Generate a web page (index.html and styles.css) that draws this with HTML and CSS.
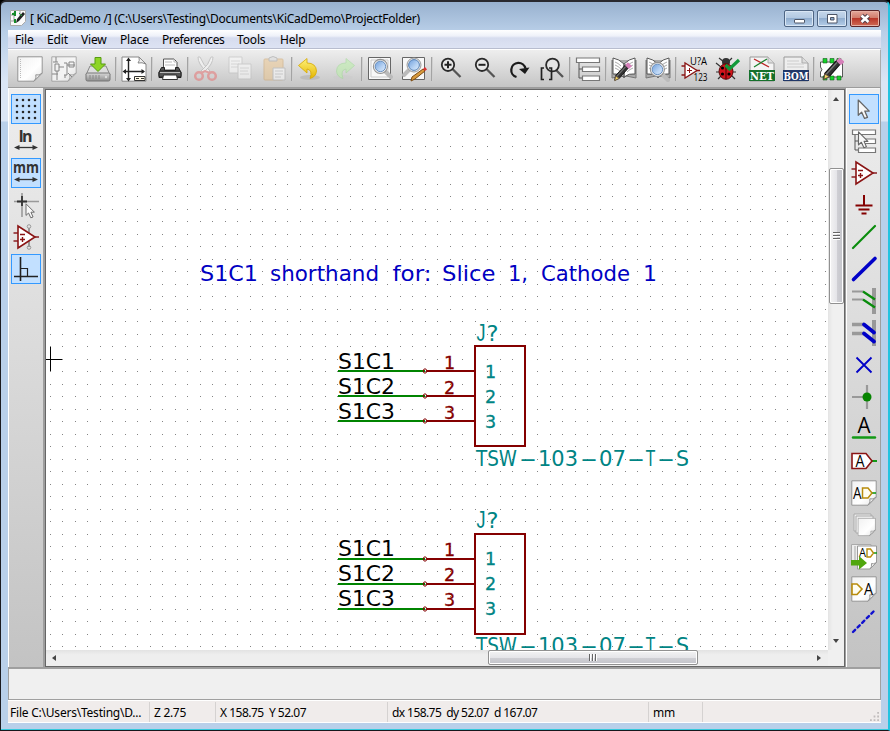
FILE: index.html
```html
<!DOCTYPE html>
<html lang="en">
<head>
<meta charset="utf-8">
<title>KiCadDemo</title>
<link rel="stylesheet" href="styles.css">
</head>
<body>
<svg class="defs" aria-hidden="true">
  <defs>
    <linearGradient id="paper" x1="0" y1="0" x2="1" y2="1"><stop offset="0" stop-color="#f1f1f1"/><stop offset=".6" stop-color="#fff"/><stop offset="1" stop-color="#e4e4e4"/></linearGradient>
    <linearGradient id="lens" x1="0" y1="0" x2="1" y2="1"><stop offset="0" stop-color="#6f9fdc"/><stop offset=".6" stop-color="#b9d4f4"/><stop offset="1" stop-color="#dceafb"/></linearGradient>
    <linearGradient id="metal" x1="0" y1="0" x2="0" y2="1"><stop offset="0" stop-color="#d8d8d8"/><stop offset="1" stop-color="#8d8d8d"/></linearGradient>
    <linearGradient id="gold" x1="0" y1="0" x2="0" y2="1"><stop offset="0" stop-color="#fff27a"/><stop offset="1" stop-color="#e3b500"/></linearGradient>
    <symbol id="page" viewBox="0 0 26 26"><path d="M.8 .8H25.2V17L17 25.2H.8Z" fill="url(#paper)" stroke="#959595"/><path d="M25.2 17Q22 20 18.8 18.800Q20 22 17 25.200Z" fill="#eee" stroke="#959595"/></symbol>
    <symbol id="opamp" viewBox="0 0 26 26"><path d="M.5 9H5M.5 17H5M21 13h5" stroke="#8a2024" stroke-width="1.6"/><path d="M5 2V24L22 13Z" fill="#fff" stroke="#8a1414" stroke-width="1.6"/><path d="M7 10.500h5M7 15.500h5M9.500 13v5" stroke="#8a1414" stroke-width="1.400"/></symbol>
    <symbol id="arrow" viewBox="0 0 12 20"><path d="M1 1V15.500L4.200 12.500L7 18.500L9.800 17.500L7.200 11.500H11.500Z" fill="#f8f8f8" stroke="#666" stroke-width="1.200" stroke-linejoin="round"/></symbol>
    <symbol id="glass" viewBox="0 0 20 20"><path d="M13 13l5 5" stroke="#bbb" stroke-width="4" stroke-linecap="round"/><circle cx="8" cy="8" r="6.700" fill="#eee" stroke="#929292"/><circle cx="8" cy="8" r="5" fill="url(#lens)" stroke="#5681b5" stroke-width=".8"/></symbol>
    <symbol id="pencil" viewBox="0 0 20 22"><path d="M2 20l1-5L14 3l3.500 3L7 18Z" fill="#333" stroke="#111"/><path d="M4 16L14 5" stroke="#777" stroke-width="1.200"/><path d="M2 20.500l1-5L7 18Z" fill="#f5d860" stroke="#654"/><path d="M14.500 3.500l2-2 3.500 3-2.500 2Z" fill="#d681ba" stroke="#d681ba" stroke-width="1.600"/></symbol>
    <symbol id="book" viewBox="0 0 26 26"><path d="M1 4V22l10-2 2 2 2-2 10 2V4" fill="#aaa" stroke="#777"/><path d="M2 2q6 1 11 6V21Q8 17 2 18ZM24 2Q18 3 13 8V21Q18 17 24 18Z" fill="#fff" stroke="#555"/><path d="M4 6q3 1 6 4M4 9q3 1 6 4M4 12q3 1 6 4M22 6q-3 1-6 4M22 9q-3 1-6 4M22 12q-3 1-6 4" fill="none" stroke="#aaa"/></symbol>
    <symbol id="tree" viewBox="0 0 26 26"><path d="M4 7V22H7M4 13H7" fill="none" stroke="#555"/><path d="M1.500 2h23v4.500h-23ZM7.500 11h17v4.500h-17ZM7.500 20h17v4.500h-17Z" fill="#fff" stroke="#777" stroke-width="1.200"/></symbol>
    <pattern id="grid" x="50" y="96" width="25" height="25" patternUnits="userSpaceOnUse"><path d="M0 0h1v1H0ZM12 0h1v1h-1ZM0 13h1v1H0ZM12 13h1v1h-1Z" fill="#848484"/></pattern>
  </defs>
</svg>

<div class="window">
  <header class="titlebar">
    <svg class="appicon" viewBox="0 0 16 16"><path d="M.5 .5h15v11l-4 4H.5Z" fill="#fafafa" stroke="#aaa"/><path d="M1 5h3M4 2v9M1 11h5M10 1v5" stroke="#999"/><path d="M5 1v5M5 9v4M2 4h3" stroke="#168a28" stroke-width="2"/><path d="M6 13l1-4 6-7 2 2-6 7Z" fill="#222"/><path d="M9 3l3 3" stroke="#29a03a"/></svg>
    <span class="caption">[ KiCadDemo /] (C:\Users\Testing\Documents\KiCadDemo\ProjectFolder)</span>
    <div class="controls">
      <span class="wbtn"><svg viewBox="0 0 30 16"><rect x="10.500" y="8.500" width="10" height="3.500" rx=".5" fill="#fff" stroke="#4c5566"/></svg></span>
      <span class="wbtn"><svg viewBox="0 0 30 16"><path d="M10.500 3.500h9.500v8.500h-9.500Z" fill="#fff" stroke="#4c5566"/><path d="M13.500 6.500h3.500v2.500h-3.500Z" fill="#8ba9cc" stroke="#4c5566"/></svg></span>
      <span class="wbtn close"><svg viewBox="0 0 30 16"><path d="M11.500 4.500l7 6.500M18.500 4.500l-7 6.500" stroke="#53414a" stroke-width="4.500"/><path d="M11.500 4.500l7 6.500M18.500 4.500l-7 6.500" stroke="#fff" stroke-width="2.500"/></svg></span>
    </div>
  </header>

  <nav class="menu"><span class="m1">File</span><span class="m2">Edit</span><span class="m3">View</span><span class="m4">Place</span><span class="m5">Preferences</span><span class="m6">Tools</span><span>Help</span></nav>

  <div class="toolbar">
    <span class="tool"><svg viewBox="0 0 26 26"><use href="#page"/><path d="M3.500 3v20" stroke="#bbb" stroke-dasharray="1 1"/></svg></span>
    <span class="tool"><svg viewBox="0 0 26 26"><use href="#page" opacity=".75"/><path d="M2 6h5M5 1v5M4 8h4v7H4ZM1 18h6M6 15v9M8 11h5M13 7h3v12h-3M14 19v3M16 9h8M18 6h5v5h-5ZM17 17l4 4" fill="none" stroke="#858585"/></svg></span>
    <span class="tool"><svg viewBox="0 0 26 26"><path d="M5 10L1 19h24l-4-9Z" fill="#ddd" stroke="#888"/><rect x="1" y="17" width="24" height="8" rx="1.500" fill="url(#metal)" stroke="#777"/><path d="M5 19v4M8 19v4M11 19v4M14 19v4" stroke="#888"/><circle cx="21" cy="21" r="1.200" fill="#ddd"/><path d="M10 1.500h6V8h4.500L13 15.500L5.500 8H10Z" fill="#8ed525" stroke="#579c12"/></svg></span>
    <i class="sep"></i>
    <span class="tool"><svg viewBox="0 0 26 26"><path d="M1 1H18l7 7V25.200H1Z" fill="#fff" stroke="#888"/><path d="M18 1q1 4-1 6 4-1 8 1Z" fill="#eee" stroke="#888"/><path d="M7.500 3v21M3 15.500h20" stroke="#222" stroke-width="1.400"/><path d="M5 5L7.500 1.500l2.500 3.500ZM5 22l2.500 3.500 2.500-3.500ZM5 13L1.500 15.500l3.500 2.500ZM20.500 13l3.500 2.500-3.500 2.500Z" fill="#222"/><path d="M13.500 20.500h10.500v4h-10.500Z" fill="#fff9e5" stroke="#333"/><path d="M15 22.500h3M20 22.500h3" stroke="#333"/></svg></span>
    <i class="sep"></i>
    <span class="tool"><svg viewBox="0 0 26 26"><path d="M6.500 14V3H17l3 3v8Z" fill="#fff" stroke="#555"/><path d="M17 3v3h3M8 6h7M8 9h10" fill="none" stroke="#bbb"/><path d="M4.500 11.500h3v3h11v-3h3l2.500 5v5H2v-5Z" fill="#555" stroke="#222"/><rect x="2" y="15" width="22" height="6" rx="1.500" fill="#555" stroke="#222"/><path d="M3 16.500h20" stroke="#bbb"/><path d="M6.500 19h13l1 4.500h-15Z" fill="#fff" stroke="#333"/></svg></span>
    <i class="sep"></i>
    <span class="tool faded"><svg viewBox="0 0 26 26"><path d="M5 1q0 7 8 14l2 2 2-2Q10 9 7 1Z" fill="#fff" stroke="#aaa"/><path d="M20 1q0 7-8 14l-3 2-1-2Q16 9 18 1Z" fill="#fff" stroke="#aaa"/><circle cx="6" cy="20" r="3.800" fill="none" stroke="#e86c6c" stroke-width="2.500"/><circle cx="19" cy="20" r="3.800" fill="none" stroke="#e86c6c" stroke-width="2.500"/><path d="M8 17l4-2 5 2" fill="none" stroke="#e86c6c" stroke-width="2"/></svg></span>
    <span class="tool faded"><svg viewBox="0 0 26 26"><path d="M2 1h13v16H2Z" fill="#fff" stroke="#bbb"/><path d="M4 5h9M4 8h8M4 11h7" stroke="#ccc"/><path d="M11 8h13v15H11Z" fill="#fff" stroke="#bbb"/><path d="M13 12h9M13 15h8M13 18h9" stroke="#ccc"/></svg></span>
    <span class="tool faded"><svg viewBox="0 0 26 26"><rect x="3" y="3" width="19" height="21" rx="1" fill="#edc58a" stroke="#cfa163"/><path d="M8 5V2q4-3 8 0v3Z" fill="#ddd" stroke="#999"/><path d="M12 12h12v12H12Z" fill="#fff" stroke="#aaa"/><path d="M14 15h8M14 18h8M14 21h6" stroke="#bbb"/></svg></span>
    <i class="sep"></i>
    <span class="tool"><svg viewBox="0 0 26 26"><ellipse cx="13" cy="21.500" rx="10" ry="2.500" fill="#bdbdbd"/><path d="M1.500 9.500L10 2.500V7Q19 7 19.500 15Q19 21 13 22.500Q16 14 10 13V17Z" fill="url(#gold)" stroke="#d5a800" stroke-width=".8"/></svg></span>
    <span class="tool faded"><svg viewBox="0 0 26 26"><ellipse cx="12" cy="21.500" rx="10" ry="2.500" fill="#ccc"/><path d="M23.500 9.500L15 2.500V7Q6 7 5.500 15Q6 21 12 22.500Q9 14 15 13V17Z" fill="#b8f2a4" stroke="#8fd882" stroke-width=".8"/></svg></span>
    <i class="sep"></i>
    <span class="tool"><svg viewBox="0 0 26 26"><path d="M1.500 1.500h22v22h-22Z" fill="#f8f8f8" stroke="#666"/><path d="M4 4h17v17H4Z" fill="none" stroke="#ccc"/><use href="#glass" x="5" y="2" width="21" height="21"/></svg></span>
    <span class="tool"><svg viewBox="0 0 26 26"><path d="M1.500 1.500h22v22h-22Z" fill="#f8f8f8" stroke="#666"/><path d="M9 13l-6 6" stroke="#bbb" stroke-width="4" stroke-linecap="round"/><circle cx="13" cy="9" r="7" fill="#eee" stroke="#999"/><circle cx="13" cy="9" r="5.400" fill="url(#lens)" stroke="#5681b5"/><path d="M10 25l1-4 11-8 2 2-10 8Z" fill="#d99a3b" stroke="#7b4c16"/><path d="M22 13l2 2 2-1.500-2-2.500Z" fill="#d33"/></svg></span>
    <i class="sep"></i>
    <span class="tool"><svg viewBox="0 0 26 26"><path d="M15.500 13l8 8" stroke="#555" stroke-width="2.300"/><circle cx="11" cy="8.800" r="6.200" fill="#e7e7e7" stroke="#2a2a2a" stroke-width="1.800"/><path d="M7.500 8.800h7M11 5.300v7" stroke="#222" stroke-width="2"/></svg></span>
    <span class="tool"><svg viewBox="0 0 26 26"><path d="M15.500 13l8 8" stroke="#555" stroke-width="2.300"/><circle cx="11" cy="8.800" r="6.200" fill="#e7e7e7" stroke="#2a2a2a" stroke-width="1.800"/><path d="M7.500 8.800h7" stroke="#222" stroke-width="2"/></svg></span>
    <span class="tool"><svg viewBox="0 0 26 26"><path d="M11.500 21A7.200 7.200 0 1 1 20.500 12.500" fill="none" stroke="#1b1b1b" stroke-width="2.300"/><path d="M14 13L24.500 11.500L20 18Z" fill="#1b1b1b"/></svg></span>
    <span class="tool"><svg viewBox="0 0 26 26"><path d="M17 14l7 7" stroke="#555" stroke-width="2.300"/><circle cx="13.500" cy="9" r="6.400" fill="#e5e5e5" stroke="#2a2a2a" stroke-width="1.800"/><path d="M5 12H2.500v11.500h2.500M10 12h2.500v11.500H10" fill="none" stroke="#222" stroke-width="1.700"/></svg></span>
    <i class="sep"></i>
    <span class="tool"><svg viewBox="0 0 26 26"><use href="#tree"/></svg></span>
    <i class="sep"></i>
    <span class="tool"><svg viewBox="0 0 26 26"><use href="#book"/><use href="#pencil" x="1" y="6" width="20" height="20"/></svg></span>
    <span class="tool"><svg viewBox="0 0 26 26"><use href="#book"/><use href="#glass" x="4" y="5" width="21" height="21"/></svg></span>
    <i class="sep"></i>
    <span class="tool"><svg viewBox="0 0 26 26"><path d="M.5 10H4M.5 19H4M15 14.500h4" stroke="#8a1414" stroke-width="1.300"/><path d="M4 7v15l12-7.500Z" fill="#fff" stroke="#8a1414" stroke-width="1.300"/><path d="M6 14.500h5M8.500 12v5" stroke="#8a1414"/><text class="tiny" x="9" y="9" textLength="17" lengthAdjust="spacingAndGlyphs">U?A</text><text class="tiny" x="12.500" y="25" textLength="14" lengthAdjust="spacingAndGlyphs">123</text></svg></span>
    <span class="tool"><svg viewBox="0 0 26 26"><path d="M4 2l5 4M17 2l-4 4M1 7l5 4M1 16h6M3 23l4-4M21 16h-5M20 23l-4-4" stroke="#333" stroke-width="1.200"/><circle cx="11" cy="6" r="4" fill="#333"/><ellipse cx="11" cy="15.500" rx="7" ry="7.800" fill="#d2141b" stroke="#5e080a"/><path d="M11 8v15" stroke="#400"/><circle cx="7.500" cy="12" r="1.500"/><circle cx="7.500" cy="18" r="1.600"/><circle cx="14" cy="18" r="1.600"/><path d="M10.500 9l4 4L24 4" fill="none" stroke="#119939" stroke-width="3.200"/></svg></span>
    <span class="tool"><svg viewBox="0 0 26 26"><path d="M1 1h18l6 6v18H1Z" fill="#f4f4f4" stroke="#999"/><path d="M19 1v6h6" fill="#ddd" stroke="#aaa"/><path d="M5 3l15 8" stroke="#b22" stroke-width="1.300"/><path d="M5 11l13-8" stroke="#1a812d" stroke-width="1.300"/><path d="M0 14h26v11H0Z" fill="#15702b"/><text class="badge" x="1" y="23.500" textLength="24" lengthAdjust="spacingAndGlyphs">NET</text></svg></span>
    <span class="tool"><svg viewBox="0 0 26 26"><path d="M1 1h18l6 6v18H1Z" fill="#eee" stroke="#999"/><path d="M19 1v6h6" fill="#ddd" stroke="#aaa"/><path d="M4 5h12M4 8h17M4 11h17" stroke="#ccc"/><path d="M0 14h26v11H0Z" fill="#203768"/><text class="badge" x=".5" y="23.500" textLength="25" lengthAdjust="spacingAndGlyphs">BOM</text></svg></span>
    <i class="sep"></i>
    <span class="tool"><svg viewBox="0 0 26 26"><path d="M1.500 6h22v15h-22v-5q3-2 0-5Z" fill="#fff" stroke="#333" stroke-width=".8"/><path d="M4 2.500h4v4.500H4ZM11 2.500h4v4.500h-4ZM18 2.500h4v4.500h-4ZM4 20h4v4H4ZM11 20h4v4h-4ZM18 20h4v4h-4Z" fill="#16d32a" stroke="#175b20" stroke-width=".6"/><use href="#pencil" x="2" y="1" width="23" height="24"/></svg></span>
  </div>

  <main class="workspace">
    <aside class="side">
      <span class="sbtn on"><svg viewBox="0 0 26 26"><path d="M4 4h18.100M4 10h18.100M4 16h18.100M4 22h18.100" stroke="#292929" stroke-width="2.600" stroke-linecap="round" stroke-dasharray="0 6"/></svg></span>
      <span class="sbtn"><svg viewBox="0 0 26 26"><text class="unit" x="5.500" y="14" textLength="14">In</text><path d="M4 19.500h18" stroke="#333" stroke-width="1.300"/><path d="M1 19.500l5.500-2.500v5ZM25 19.500l-5.500-2.500v5Z" fill="#333"/></svg></span>
      <span class="sbtn on"><svg viewBox="0 0 26 26"><text class="unit" x="0" y="13" textLength="26" lengthAdjust="spacingAndGlyphs">mm</text><path d="M4 19.500h18" stroke="#333" stroke-width="1.300"/><path d="M1 19.500l5.500-2.500v5ZM25 19.500l-5.500-2.500v5Z" fill="#333"/></svg></span>
      <span class="sbtn"><svg viewBox="0 0 26 26"><path d="M1 9.500h25M9 1v24" stroke="#999" stroke-width="1.600"/><path d="M4 9.500h10M9 4v10" stroke="#333" stroke-width="1.800"/><use href="#arrow" x="12" y="11" width="10" height="16"/></svg></span>
      <span class="sbtn"><svg viewBox="0 0 26 26"><path d="M16 4v19" stroke="#999" stroke-width="2"/><circle cx="16" cy="2.500" r="1.800" fill="none" stroke="#999"/><circle cx="16" cy="23.500" r="1.800" fill="none" stroke="#999"/><use href="#opamp"/></svg></span>
      <span class="sbtn on"><svg viewBox="0 0 26 26"><path d="M7.500 1v24M1 20.500h24" stroke="#222" stroke-width="1.600"/><path d="M7.500 12.500h7v8" fill="none" stroke="#222" stroke-width="1.200"/></svg></span>
    </aside>

    <section class="sheet">
      <svg class="drawing" viewBox="46 90 782 560">
        <rect x="46" y="90" width="782" height="560" fill="#fff"/>
        <rect x="46" y="90" width="782" height="560" fill="url(#grid)"/>
        <path d="M50.500 347v24M46 359.500h16" stroke="#000"/>
        <text class="stroke note" y="281"><tspan x="200" textLength="58" lengthAdjust="spacingAndGlyphs">S1C1</tspan> <tspan x="270" textLength="109" lengthAdjust="spacingAndGlyphs">shorthand</tspan> <tspan x="392.500" textLength="39" lengthAdjust="spacingAndGlyphs">for:</tspan> <tspan x="442" textLength="53.500" lengthAdjust="spacingAndGlyphs">Slice</tspan> <tspan x="508" textLength="20" lengthAdjust="spacingAndGlyphs">1,</tspan> <tspan x="541" textLength="89" lengthAdjust="spacingAndGlyphs">Cathode</tspan> <tspan x="643">1</tspan></text>
        <g id="shape">
          <path d="M338 371h87M338 396h87M338 421h87" stroke="#008400" stroke-width="2"/>
          <path d="M427 371h48M427 396h48M427 421h48" stroke="#840000" stroke-width="2"/>
          <rect x="475" y="346" width="50" height="100" fill="none" stroke="#840000" stroke-width="2"/>
          <g fill="none" stroke="#840000"><ellipse cx="425" cy="371" rx="1.700" ry="2.200"/><ellipse cx="425" cy="396" rx="1.700" ry="2.200"/><ellipse cx="425" cy="421" rx="1.700" ry="2.200"/></g>
        </g>
        <g id="labels">
          <g class="stroke label"><text x="338" y="369" textLength="57" lengthAdjust="spacingAndGlyphs">S1C1</text><text x="338" y="394" textLength="57" lengthAdjust="spacingAndGlyphs">S1C2</text><text x="338" y="419" textLength="57" lengthAdjust="spacingAndGlyphs">S1C3</text></g>
          <g class="stroke pin"><text x="444" y="369">1</text><text x="444" y="393.500">2</text><text x="444" y="418.500">3</text></g>
          <g class="stroke pin name"><text x="485" y="378">1</text><text x="485" y="403">2</text><text x="485" y="428">3</text></g>
          <g class="stroke value"><text y="341"><tspan class="jay" x="476.500" textLength="9" lengthAdjust="spacingAndGlyphs">J</tspan><tspan x="486.500" textLength="12" lengthAdjust="spacingAndGlyphs">?</tspan></text><text y="466"><tspan x="476" textLength="41" lengthAdjust="spacingAndGlyphs">TSW</tspan><tspan x="519" textLength="18" lengthAdjust="spacingAndGlyphs">-</tspan><tspan x="538" textLength="40" lengthAdjust="spacingAndGlyphs">103</tspan><tspan x="580" textLength="18" lengthAdjust="spacingAndGlyphs">-</tspan><tspan x="599" textLength="27" lengthAdjust="spacingAndGlyphs">07</tspan><tspan x="627" textLength="18" lengthAdjust="spacingAndGlyphs">-</tspan><tspan x="646" textLength="9" lengthAdjust="spacingAndGlyphs">T</tspan><tspan x="657" textLength="18" lengthAdjust="spacingAndGlyphs">-</tspan><tspan x="676" textLength="13" lengthAdjust="spacingAndGlyphs">S</tspan></text></g>
        </g>
        <use href="#shape" y="188"/>
        <use href="#labels" y="187"/>
      </svg>
      <div class="vscroll"><b class="up"></b><div class="vthumb"><i></i><i></i><i></i></div><b class="down"></b></div>
      <div class="hscroll"><b class="left"></b><div class="hthumb"><i></i><i></i><i></i></div><b class="right"></b></div>
      <div class="corner"></div>
    </section>

    <aside class="side right-side">
      <span class="sbtn on"><svg viewBox="0 0 26 26"><use href="#arrow" x="6" y="3" width="13" height="21"/></svg></span>
      <span class="sbtn"><svg viewBox="0 0 26 26"><use href="#tree"/><use href="#arrow" x="6" y="3" width="12" height="18"/></svg></span>
      <span class="sbtn"><svg viewBox="0 0 26 26"><use href="#opamp"/></svg></span>
      <span class="sbtn"><svg viewBox="0 0 26 26"><path d="M13 3v10M4.500 13.500h17M7.500 17.500h11M10.500 21.500h5" stroke="#840000" stroke-width="2"/></svg></span>
      <span class="sbtn"><svg viewBox="0 0 26 26"><path d="M2 24L24 2" stroke="#098c0c" stroke-width="2.200" stroke-linecap="round"/></svg></span>
      <span class="sbtn"><svg viewBox="0 0 26 26"><path d="M2.500 23.500L24 2.500" stroke="#0000c8" stroke-width="3.600" stroke-linecap="round"/></svg></span>
      <span class="sbtn"><svg viewBox="0 0 26 26"><path d="M1 3.500h11M1 11.500h11" stroke="#999" stroke-width="2"/><path d="M23 0v26" stroke="#999" stroke-width="4"/><path d="M12 3.500l12 8M12 11.500l12 8" stroke="#098c0c" stroke-width="2.200"/></svg></span>
      <span class="sbtn"><svg viewBox="0 0 26 26"><path d="M1 4.500h12M1 13.500h12" stroke="#999" stroke-width="3.500"/><path d="M23 0v26" stroke="#999" stroke-width="4"/><path d="M13 4.500l10 8M13 13.500l10 8" stroke="#0000c8" stroke-width="3.800" stroke-linecap="round"/></svg></span>
      <span class="sbtn"><svg viewBox="0 0 26 26"><path d="M5.500 5.500l15 15M20.500 5.500l-15 15" stroke="#0000c8" stroke-width="1.800"/></svg></span>
      <span class="sbtn"><svg viewBox="0 0 26 26"><path d="M1 13h15M16 1v24" stroke="#999" stroke-width="2.200"/><circle cx="16" cy="13" r="4.500" fill="#068400"/></svg></span>
      <span class="sbtn"><svg viewBox="0 0 26 26"><text class="letter" x="6.500" y="17" textLength="13" lengthAdjust="spacingAndGlyphs">A</text><path d="M2 21.500h22" stroke="#129916" stroke-width="2.400" stroke-linecap="round"/></svg></span>
      <span class="sbtn"><svg viewBox="0 0 26 26"><path d="M20 13h6" stroke="#129916" stroke-width="2"/><path d="M1 5.500h14l6 7.500-6 7.500H1Z" fill="#fff" stroke="#8a1414" stroke-width="1.600"/><text class="mid" x="4.500" y="18.500" textLength="9" lengthAdjust="spacingAndGlyphs">A</text></svg></span>
      <span class="sbtn"><svg viewBox="0 0 26 26"><use href="#page"/><path d="M21 13h4" stroke="#129916" stroke-width="1.600"/><path d="M11.500 8h5.500l4 5-4 5h-5.500Z" fill="#fffdf0" stroke="#b88b0b" stroke-width="1.500"/><text class="mid" x="2" y="18.500" textLength="8.500" lengthAdjust="spacingAndGlyphs">A</text></svg></span>
      <span class="sbtn"><svg viewBox="0 0 26 26"><path d="M3 2h17v17H3Z" fill="#eee" stroke="#aaa"/><path d="M5 4h17v17H5Z" fill="#eee" stroke="#aaa"/><use href="#page" x="6.500" y="5.500" width="18.500" height="19"/></svg></span>
      <span class="sbtn"><svg viewBox="0 0 26 26"><path d="M.5 .5H20V20H.5Z" fill="#eee" stroke="#aaa"/><path d="M4 2v18" stroke="#aaa"/><path d="M6.500 2H25.500V18.500L19 25H6.500Z" fill="#fff" stroke="#999"/><path d="M25.500 18.500Q22 20.500 20.500 19.500Q21 23 19 25Z" fill="#eee" stroke="#999"/><path d="M22 9h4" stroke="#129916" stroke-width="1.500"/><path d="M16 5h3.500l3 4-3 4H16Z" fill="#fff" stroke="#b88b0b" stroke-width="1.400"/><text class="small" x="8" y="13" textLength="7" lengthAdjust="spacingAndGlyphs">A</text><path d="M0 16h8v-4l8 7-8 6.500v-4H0Z" fill="#50a60e"/></svg></span>
      <span class="sbtn"><svg viewBox="0 0 26 26"><use href="#page"/><path d="M1 8h5l5 5-5 5.500H1Z" fill="#fffdf0" stroke="#b88b0b" stroke-width="1.600"/><text class="mid" x="13" y="18.500" textLength="9" lengthAdjust="spacingAndGlyphs">A</text></svg></span>
      <span class="sbtn"><svg viewBox="0 0 26 26"><path d="M2 24L24 2" stroke="#1111cf" stroke-width="2.400" stroke-dasharray="3 3.500" stroke-linecap="round"/></svg></span>
    </aside>
  </main>

  <div class="messages"></div>
  <footer class="status"><span class="s1">File C:\Users\Testing\D...</span><span class="s2">Z 2.75</span><span class="s3">X 158.75&nbsp; Y 52.07</span><span class="s4">dx 158.75&nbsp; dy 52.07&nbsp; d 167.07</span><span class="s5">mm</span><span class="s6"><svg viewBox="0 0 10 10"><path d="M8 0h2v2H8ZM4 4h2v2H4ZM8 4h2v2H8ZM0 8h2v2H0ZM4 8h2v2H4ZM8 8h2v2H8Z" fill="#c0bcbc"/></svg></span></footer>
</div>
</body>
</html>
```

FILE: styles.css
```css
* { box-sizing: border-box; }
body { margin: 0; background: #000; font: 12px/18px "Noto Sans", "Open Sans", sans-serif; color: #000; }
svg { display: block; }
.defs { position: absolute; width: 0; height: 0; }

.window {
  width: 890px; height: 731px; padding: 0 7px 6px;
  display: flex; flex-direction: column;
  background: linear-gradient(#98b1cf 0, #b9cfe8 30px, #dbe6f5 80px, #dbe6f5 119px, #b9d0ea 120px);
  border: 1px solid #1b1b20; border-top: 2px solid #29292f; border-right: 2px solid #23c3e0; border-bottom-color: #16171c;
  border-radius: 6px 6px 0 0;
  box-shadow: inset 0 -1px #35c9dc;
}
.titlebar { height: 28px; flex: none; display: flex; align-items: flex-start; padding: 8px 1px 0 2px; }
.appicon { width: 16px; height: 16px; }
.caption { margin-left: 4px; line-height: 18px; flex: 1; letter-spacing: -.25px; white-space: nowrap; }
.controls { display: flex; gap: 3px; }
.wbtn { width: 30px; height: 17px; border: 1px solid #4e6583; border-radius: 2px; background: linear-gradient(#c6d8eb 0, #b3c9e2 45%, #91aecf 50%, #b5cee8); box-shadow: inset 0 0 0 1px #d9e6f4; }
.wbtn svg { width: 30px; height: 16px; margin: 0 -1px; }
.wbtn.close { border-color: #5b2428; background: linear-gradient(#e4a79b 0, #d17c6c 45%, #b9372a 50%, #cf6a55); box-shadow: inset 0 0 0 1px #e6b1a5; }

.menu { height: 19px; flex: none; display: flex; padding-left: 7px; line-height: 20px; background: linear-gradient(#fff 0, #eef1f9 6px, #d6dcee 8px, #dde3f3); border-bottom: 1px solid #b8bdcf; white-space: nowrap; letter-spacing: -.15px; }
.m1 { width: 32px; }
.m2 { width: 34px; }
.m3 { width: 39px; }
.m4 { width: 42px; }
.m5 { width: 75px; letter-spacing: -.45px; }
.m5 { letter-spacing: -.4px; }
.m6 { width: 43px; }

.toolbar { height: 39px; flex: none; display: flex; align-items: center; padding: 1px 0 0 5px; background: linear-gradient(#eee, #c5c5c5); border-top: 1px solid #fff; border-bottom: 1px solid #9c9c9c; border-right: 1px solid #aaa; }
.tool { width: 34px; height: 26px; padding: 0 4px; flex: none; }
.tool svg, .sbtn svg { width: 26px; height: 26px; overflow: visible; }
.sep { width: 2px; height: 24px; flex: none; background: linear-gradient(90deg, #a3a3a3 50%, #cfcfcf 50%); }
.faded { opacity: .5; }
.tiny { font: 10px "Open Sans", sans-serif; }
.badge { font: bold 11px "DejaVu Serif", serif; fill: #fff; }
.unit { font: bold 16px "Open Sans", sans-serif; fill: #333; }
.letter { font: 21px "Open Sans", sans-serif; }
.mid { font: 16px "Open Sans", sans-serif; }
.small { font: 12px "Open Sans", sans-serif; }

.workspace { height: 580px; flex: none; display: grid; grid-template-columns: 37px 800px 1fr; background: #9e9e9e; }
.side { margin: 0 2px 1px 0; padding: 5px 0 0 2px; display: flex; flex-direction: column; gap: 2px; background: linear-gradient(#eee, #c3c3c3); border-top: 1px solid #f5f5f5; border-left: 1px solid #fff; }
.right-side { margin: 0 1px 1px 1px; }
.sbtn { width: 30px; height: 30px; padding: 2px; flex: none; }
.sbtn.on { padding: 1px; border: 1px solid #3399ff; background: #c2e0ff; }

.sheet { margin-top: 1px; height: 578px; border: 1px solid #666; display: grid; grid-template-columns: 782px 16px; grid-template-rows: 560px 16px; background: #f0f0f0; overflow: hidden; }
.drawing { width: 782px; height: 560px; }
.stroke { font-family: "DejaVu Sans", sans-serif; font-size: 22px; }
.jay { font-family: "Liberation Sans", sans-serif; font-size: 23px; }
.note { fill: #0000c2; }
.value, .name { fill: #008484; }
.pin { font-size: 17.500px; fill: #840000; stroke: #840000; stroke-width: .3px; }
.pin.name { fill: #008484; stroke: #008484; }

.vscroll { display: flex; flex-direction: column; align-items: center; background: linear-gradient(90deg, #e4e4e4, #f0f0f0 30%); }
.hscroll { display: flex; align-items: center; background: linear-gradient(#e2e2e2, #eee 30%); }
.vscroll b, .hscroll b { width: 0; height: 0; border: 3px solid transparent; }
.vscroll .up { margin-top: 7px; border-bottom: 4px solid #444; border-top: 0; }
.vscroll .down { margin: auto 0 7px; border-top: 4px solid #444; border-bottom: 0; }
.hscroll .left { margin-left: 6px; border-right: 4px solid #444; border-left: 0; }
.hscroll .right { margin: 0 7px 0 auto; border-left: 4px solid #444; border-right: 0; }
.vthumb, .hthumb { display: flex; justify-content: center; align-items: center; border: 1px solid #919191; border-radius: 2px; box-shadow: inset 0 0 0 1px #fff; }
.vthumb { width: 15px; height: 136px; margin-top: 67px; flex-direction: column; gap: 1px; background: linear-gradient(90deg, #f4f4f4, #e5e5e9 50%, #cfcfd4 55%, #c3c4ca); }
.hthumb { width: 210px; height: 15px; margin: -1px 0 0 432px; gap: 1px; background: linear-gradient(#f4f4f4, #e5e5e9 50%, #cfcfd4 55%, #c3c4ca); }
.vthumb i { width: 7px; height: 2px; background: #666; border-bottom: 1px solid #fff; }
.hthumb i { width: 2px; height: 7px; background: #666; border-right: 1px solid #fff; }

.messages { height: 32px; flex: none; background: #f0f0f0; border: 1px solid #a0a0a0; }
.status { height: 23px; flex: none; display: flex; line-height: 22px; padding-top: 1px; background: #f0eceb; border-top: 1px solid #fff; border-bottom: 1px solid #fff; letter-spacing: -.3px; white-space: nowrap; }
.status span { flex: none; padding-left: 4px; border-right: 1px solid #d5d2d1; }
.status .s1 { width: 142px; padding-left: 2px; letter-spacing: -.22px; }
.s2 { width: 66px; }
.s3 { width: 172px; letter-spacing: -.5px; }
.s4 { width: 261px; letter-spacing: -.58px; }
.s5 { width: 54px; }
.status .s6 { flex: 1; border: 0; display: flex; justify-content: flex-end; align-items: flex-end; padding: 0 2px 1px; }
.s6 svg { width: 9px; height: 9px; }
```
